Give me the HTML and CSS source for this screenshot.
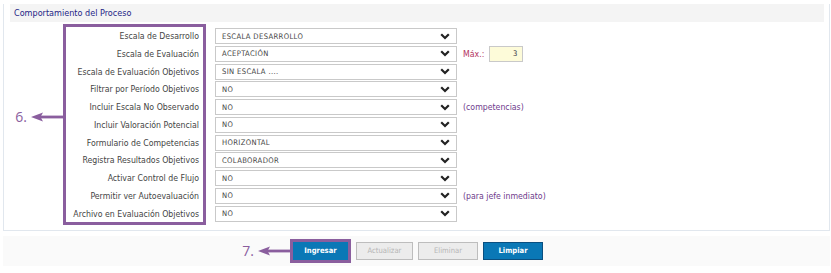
FILE: index.html
```html
<!DOCTYPE html>
<html lang="es">
<head>
<meta charset="utf-8">
<title>Comportamiento del Proceso</title>
<link rel="stylesheet" href="styles.css">
</head>
<body>
<div class="panel">
  <div class="panel-head">Comportamiento del Proceso</div>
  <div class="form">
    <div class="labels">
      <div class="annot annot-6"><span class="annot-num">6.</span><svg class="arrow" width="32" height="10" viewBox="0 0 32 10"><rect x="9" y="3.6" width="23" height="2.8" fill="#8a5e9e"/><polygon points="0,5 12,0.5 9.5,5 12,9.5" fill="#8a5e9e"/></svg></div>
      <div class="lbl">Escala de Desarrollo</div>
      <div class="lbl">Escala de Evaluación</div>
      <div class="lbl">Escala de Evaluación Objetivos</div>
      <div class="lbl">Filtrar por Período Objetivos</div>
      <div class="lbl">Incluir Escala No Observado</div>
      <div class="lbl">Incluir Valoración Potencial</div>
      <div class="lbl">Formulario de Competencias</div>
      <div class="lbl">Registra Resultados Objetivos</div>
      <div class="lbl">Activar Control de Flujo</div>
      <div class="lbl">Permitir ver Autoevaluación</div>
      <div class="lbl">Archivo en Evaluación Objetivos</div>
    </div>
    <div class="fields">
      <div class="sel"><span>ESCALA DESARROLLO</span><svg class="chev" width="10" height="7" viewBox="0 0 10 7"><path d="M1.2 1.2 L5 5 L8.8 1.2" fill="none" stroke="#222" stroke-width="2.2"/></svg></div>
      <div class="sel"><span>ACEPTACIÓN</span><svg class="chev" width="10" height="7" viewBox="0 0 10 7"><path d="M1.2 1.2 L5 5 L8.8 1.2" fill="none" stroke="#222" stroke-width="2.2"/></svg></div>
      <div class="sel"><span>SIN ESCALA ....</span><svg class="chev" width="10" height="7" viewBox="0 0 10 7"><path d="M1.2 1.2 L5 5 L8.8 1.2" fill="none" stroke="#222" stroke-width="2.2"/></svg></div>
      <div class="sel"><span>NO</span><svg class="chev" width="10" height="7" viewBox="0 0 10 7"><path d="M1.2 1.2 L5 5 L8.8 1.2" fill="none" stroke="#222" stroke-width="2.2"/></svg></div>
      <div class="sel"><span>NO</span><svg class="chev" width="10" height="7" viewBox="0 0 10 7"><path d="M1.2 1.2 L5 5 L8.8 1.2" fill="none" stroke="#222" stroke-width="2.2"/></svg></div>
      <div class="sel"><span>NO</span><svg class="chev" width="10" height="7" viewBox="0 0 10 7"><path d="M1.2 1.2 L5 5 L8.8 1.2" fill="none" stroke="#222" stroke-width="2.2"/></svg></div>
      <div class="sel"><span>HORIZONTAL</span><svg class="chev" width="10" height="7" viewBox="0 0 10 7"><path d="M1.2 1.2 L5 5 L8.8 1.2" fill="none" stroke="#222" stroke-width="2.2"/></svg></div>
      <div class="sel"><span>COLABORADOR</span><svg class="chev" width="10" height="7" viewBox="0 0 10 7"><path d="M1.2 1.2 L5 5 L8.8 1.2" fill="none" stroke="#222" stroke-width="2.2"/></svg></div>
      <div class="sel"><span>NO</span><svg class="chev" width="10" height="7" viewBox="0 0 10 7"><path d="M1.2 1.2 L5 5 L8.8 1.2" fill="none" stroke="#222" stroke-width="2.2"/></svg></div>
      <div class="sel"><span>NO</span><svg class="chev" width="10" height="7" viewBox="0 0 10 7"><path d="M1.2 1.2 L5 5 L8.8 1.2" fill="none" stroke="#222" stroke-width="2.2"/></svg></div>
      <div class="sel"><span>NO</span><svg class="chev" width="10" height="7" viewBox="0 0 10 7"><path d="M1.2 1.2 L5 5 L8.8 1.2" fill="none" stroke="#222" stroke-width="2.2"/></svg></div>
    </div>
    <div class="extras">
      <div class="ex"></div>
      <div class="ex"><span class="max">Máx.:</span><span class="num">3</span></div>
      <div class="ex"></div>
      <div class="ex"></div>
      <div class="ex"><span class="note">(competencias)</span></div>
      <div class="ex"></div>
      <div class="ex"></div>
      <div class="ex"></div>
      <div class="ex"></div>
      <div class="ex"><span class="note">(para jefe inmediato)</span></div>
      <div class="ex"></div>
    </div>
  </div>
</div>
<div class="actions">
  <div class="hl">
    <div class="annot annot-7"><span class="annot-num">7.</span><svg class="arrow" width="32" height="10" viewBox="0 0 32 10"><rect x="9" y="3.6" width="23" height="2.8" fill="#8a5e9e"/><polygon points="0,5 12,0.5 9.5,5 12,9.5" fill="#8a5e9e"/></svg></div>
    <button class="btn btn-primary btn-in">Ingresar</button>
  </div>
  <button class="btn btn-off btn-mid">Actualizar</button>
  <button class="btn btn-off btn-wide">Eliminar</button>
  <button class="btn btn-primary btn-dark btn-wide">Limpiar</button>
</div>
</body>
</html>
```
FILE: styles.css
```css
* { box-sizing: border-box; }
html, body { margin: 0; padding: 0; background: #fff; }
body {
  font-family: "DejaVu Sans Condensed", "DejaVu Sans", sans-serif;
  font-stretch: condensed;
  font-size: 8.7px;
  color: #444;
}
.panel {
  margin-left: 3px;
  width: 827px;
  border: 1px solid #e1e7ee;
  border-top: none;
  padding-bottom: 5px;
}
.panel-head {
  margin: 4px 5px 0 6px;
  height: 18px;
  background: #f4f4f4;
  color: #1e1e86;
  padding-left: 4px;
  line-height: 18px;
  font-size: 9px;
}
.form {
  display: flex;
  align-items: flex-start;
  margin-top: 2px;
  margin-left: 59px;
}
.labels {
  position: relative;
  width: 143px;
  border: 3px solid #8a5e9e;
  padding: 1px 4px 0 0;
  display: flex;
  flex-direction: column;
  gap: 1.75px;
}
.lbl {
  height: 16px;
  line-height: 16px;
  text-align: right;
  white-space: nowrap;
}
.fields {
  margin-left: 9px;
  margin-top: 4px;
  display: flex;
  flex-direction: column;
  gap: 1.75px;
}
.sel {
  width: 242px;
  height: 16px;
  border: 1px solid #c9c9c9;
  background: #fff;
  display: flex;
  align-items: center;
  justify-content: space-between;
  padding: 0 6px 0 6px;
  font-size: 7.6px;
  letter-spacing: 0.35px;
  color: #444;
}
.chev { display: block; }
.extras {
  margin-left: 6px;
  margin-top: 4px;
  display: flex;
  flex-direction: column;
  gap: 1.75px;
}
.ex {
  height: 16px;
  display: flex;
  align-items: center;
  gap: 5px;
  white-space: nowrap;
}
.max { color: #b2325e; }
.num {
  width: 34px;
  height: 16px;
  border: 1px solid #c9c9c9;
  background: #fdfbd9;
  text-align: right;
  padding-right: 5px;
  line-height: 14px;
  font-size: 7.6px;
  color: #334;
}
.note { color: #6e3a8c; }
.annot {
  position: absolute;
  display: flex;
  align-items: center;
  gap: 4px;
  color: #8a5e9e;
  white-space: nowrap;
}
.annot-num {
  font-family: "Open Sans", "DejaVu Sans", sans-serif;
  font-stretch: normal;
  font-size: 14px;
  line-height: 14px;
}
.arrow { display: block; }
.annot-6 {
  right: calc(100% + 3px);
  top: 83px;
}
.actions {
  margin: 5px 0 0 3px;
  width: 827px;
  height: 30px;
  background: #fafafa;
  display: flex;
  align-items: center;
  justify-content: center;
  gap: 5px;
}
.hl {
  position: relative;
  border: 3px solid #8a5e9e;
  display: flex;
}
.annot-7 {
  right: calc(100% + 3px);
  top: 50%;
  transform: translateY(-50%);
}
.btn {
  height: 18px;
  font-family: "DejaVu Sans Condensed", "DejaVu Sans", sans-serif;
  font-stretch: condensed;
  font-size: 7.6px;
  padding: 0;
  border: 1px solid;
  margin: 0;
}
.btn-primary {
  background: #0a78b6;
  border-color: #0a78b6;
  color: #fff;
  font-weight: bold;
}
.btn-dark { border-color: #0a4f80; }
.btn-off {
  background: #ececec;
  border-color: #bdbdbd;
  color: #b5b5b5;
}
.btn-in { width: 55px; }
.btn-mid { width: 57px; }
.btn-wide { width: 60px; }
```
